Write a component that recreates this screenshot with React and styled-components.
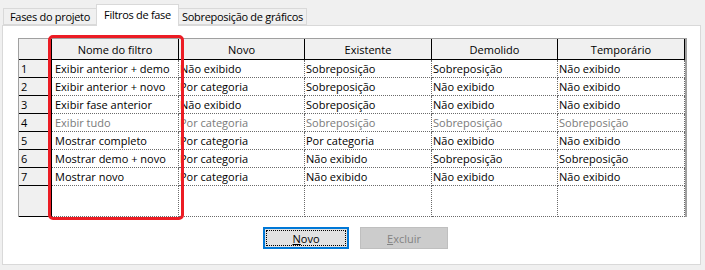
import React from "react";
import styled, { createGlobalStyle } from "styled-components";

const GlobalStyle = createGlobalStyle`
  html, body {
    margin: 0;
    padding: 0;
    background: #f0f0f0;
    font-family: "Segoe UI", "Open Sans", "Noto Sans", sans-serif;
    font-size: 11px;
    color: #000;
  }
`;

const tabs = [
  { label: "Fases do projeto", width: 94 },
  { label: "Filtros de fase", width: 83, active: true },
  { label: "Sobreposição de gráficos", width: 129 },
];

const columns = ["Nome do filtro", "Novo", "Existente", "Demolido", "Temporário"];

const rows = [
  ["Exibir anterior + demo", "Não exibido", "Sobreposição", "Sobreposição", "Não exibido"],
  ["Exibir anterior + novo", "Por categoria", "Sobreposição", "Não exibido", "Não exibido"],
  ["Exibir fase anterior", "Não exibido", "Sobreposição", "Não exibido", "Não exibido"],
  ["Exibir tudo", "Por categoria", "Sobreposição", "Sobreposição", "Sobreposição", true],
  ["Mostrar completo", "Por categoria", "Por categoria", "Não exibido", "Não exibido"],
  ["Mostrar demo + novo", "Por categoria", "Não exibido", "Sobreposição", "Sobreposição"],
  ["Mostrar novo", "Por categoria", "Não exibido", "Não exibido", "Não exibido"],
];

function App() {
  return (
    <Window>
      <GlobalStyle />
      <TabBar>
        {tabs.map((t) => (
          <Tab key={t.label} active={t.active} w={t.width}>
            {t.label}
          </Tab>
        ))}
      </TabBar>
      <Panel>
        <GridWrap>
          <Grid>
            <HeaderCell />
            {columns.map((c) => (
              <HeaderCell key={c}>{c}</HeaderCell>
            ))}
            {rows.map((r, i) => (
              <React.Fragment key={i}>
                <RowHead>{i + 1}</RowHead>
                {r.slice(0, 5).map((v, j) => (
                  <Cell key={j} dim={r[5]} first={j === 0}>
                    {v}
                  </Cell>
                ))}
              </React.Fragment>
            ))}
            <RowHead />
            {columns.map((c) => (
              <Cell key={c} />
            ))}
          </Grid>
          <Highlight />
        </GridWrap>
        <Buttons>
          <Button primary>
            <u>N</u>ovo
          </Button>
          <Button disabled>
            <u>E</u>xcluir
          </Button>
        </Buttons>
      </Panel>
    </Window>
  );
}

export default App;

const Window = styled.div`
  width: 705px;
  height: 270px;
  padding: 4px 4px 0 2px;
  box-sizing: border-box;
  display: flex;
  flex-direction: column;
`;

const TabBar = styled.div`
  display: flex;
  align-items: flex-end;
  height: 21px;
  padding-left: 1px;
  position: relative;
  z-index: 1;
`;

const Tab = styled.div`
  width: ${(p) => p.w}px;
  height: ${(p) => (p.active ? "22px" : "17px")};
  margin-bottom: ${(p) => (p.active ? "-1px" : "0")};
  display: flex;
  align-items: center;
  justify-content: center;
  box-sizing: border-box;
  background: ${(p) => (p.active ? "#fff" : "#f0f0f0")};
  border: 1px solid #d9d9d9;
  border-bottom: ${(p) => (p.active ? "none" : "1px solid #d9d9d9")};
  white-space: nowrap;
  letter-spacing: -0.3px;
  padding-bottom: ${(p) => (p.active ? "2px" : "0")};
  & + & {
    margin-left: -1px;
  }
`;

const Panel = styled.div`
  width: 699px;
  height: 240px;
  box-sizing: border-box;
  background: #fff;
  border: 1px solid #d9d9d9;
  padding: 12px 0 0 15px;
  display: flex;
  flex-direction: column;
`;

const GridWrap = styled.div`
  position: relative;
  width: 668px;
`;

const Grid = styled.div`
  display: grid;
  grid-template-columns: 33px 127px 126px 127px 126px 127px;
  grid-template-rows: 21px repeat(7, 18px) 31px;
  border-left: 1px solid #a0a0a0;
  border-top: 1px solid #a0a0a0;
  border-right: 2px solid #a0a0a0;
  width: max-content;
`;

const HeaderCell = styled.div`
  box-sizing: border-box;
  background: #f0f0f0;
  border-right: 1px solid #000;
  border-bottom: 1px solid #000;
  display: flex;
  align-items: center;
  justify-content: center;
  white-space: nowrap;
`;

const RowHead = styled.div`
  box-sizing: border-box;
  background: #f0f0f0;
  border-right: 1px solid #000;
  border-bottom: 1px solid #000;
  padding-left: 2px;
  display: flex;
  align-items: center;
`;

const Cell = styled.div`
  box-sizing: border-box;
  border-right: 1px dotted #6a6a6a;
  border-bottom: 1px dotted #6a6a6a;
  padding-left: ${(p) => (p.first ? "3px" : "1px")};
  display: flex;
  align-items: center;
  white-space: nowrap;
  overflow: hidden;
  color: ${(p) => (p.dim ? "#7a7a7a" : "#000")};
`;

const Highlight = styled.div`
  position: absolute;
  left: 30px;
  top: -3px;
  width: 136px;
  height: 185px;
  box-sizing: border-box;
  border: 3px solid #ec1c24;
  border-radius: 5px;
  pointer-events: none;
`;

const Buttons = styled.div`
  display: flex;
  gap: 11px;
  margin-top: 10px;
  padding-left: 245px;
`;

const Button = styled.button`
  width: ${(p) => (p.primary ? "86px" : "88px")};
  height: 22px;
  box-sizing: border-box;
  font: inherit;
  padding: 0;
  background: ${(p) => (p.primary ? "#e1e1e1" : "#cccccc")};
  border: ${(p) => (p.primary ? "2px solid #0078d7" : "1px solid #bfbfbf")};
  color: ${(p) => (p.disabled ? "#838383" : "#000")};
  outline: ${(p) => (p.primary ? "1px dotted #000" : "none")};
  outline-offset: -4px;
`;
